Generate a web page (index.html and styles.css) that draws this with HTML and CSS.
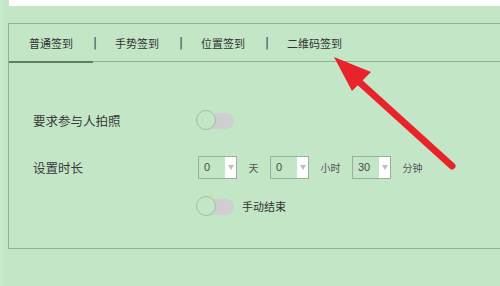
FILE: index.html
```html
<!DOCTYPE html>
<html>
<head>
<meta charset="utf-8">
<link rel="stylesheet" href="styles.css">
</head>
<body>
<div class="page">
  <div class="topbar"></div>
  <div class="panel">
    <div class="tabs">
      <div class="tab active">普通签到</div>
      <span class="sep">|</span>
      <div class="tab">手势签到</div>
      <span class="sep">|</span>
      <div class="tab">位置签到</div>
      <span class="sep">|</span>
      <div class="tab">二维码签到</div>
    </div>
    <div class="form">
      <div class="row row-photo">
        <div class="label">要求参与人拍照</div>
        <div class="switch"><span class="knob"></span></div>
      </div>
      <div class="row row-time">
        <div class="label">设置时长</div>
        <div class="times">
          <div class="select"><span class="val">0</span><span class="arrow"></span></div>
          <span class="unit">天</span>
          <div class="select"><span class="val">0</span><span class="arrow"></span></div>
          <span class="unit">小时</span>
          <div class="select"><span class="val">30</span><span class="arrow"></span></div>
          <span class="unit">分钟</span>
        </div>
      </div>
      <div class="row row-end">
        <div class="label"></div>
        <div class="switch"><span class="knob"></span></div>
        <span class="end-text">手动结束</span>
      </div>
    </div>
  </div>
  <svg class="pointer" width="500" height="286" viewBox="0 0 500 286">
    <line x1="356" y1="79" x2="452" y2="166" stroke="#e8232b" stroke-width="7" stroke-linecap="round"/>
    <polygon points="334,57 371,72 352,91" fill="#e8232b"/>
  </svg>
</div>
</body>
</html>
```

FILE: styles.css
```css
html, body {
  margin: 0;
  padding: 0;
}
body {
  background: #c2e6c6;
  font-family: "Noto Sans CJK SC", "Noto Sans", sans-serif;
  color: #333;
  overflow: hidden;
}
.page {
  position: relative;
  width: 500px;
  height: 286px;
  border-left: 2px solid #c9eacd;
  box-sizing: border-box;
  overflow: hidden;
}
.topbar {
  margin-left: 7px;
  height: 6px;
  background: #ffffff;
}
.panel {
  margin-top: 17px;
  margin-left: 6px;
  height: 226px;
  box-sizing: border-box;
  border: 1px solid #93b198;
  border-right: none;
}
.tabs {
  display: flex;
  align-items: center;
  height: 37px;
  border-bottom: 1px solid #8fad94;
  font-size: 11px;
  white-space: nowrap;
}
.tab {
  height: 37px;
  line-height: 39px;
  padding: 0 20px;
  box-sizing: border-box;
}
.tab.active {
  border-bottom: 2px solid #5f7e65;
  margin-bottom: -2px;
  height: 39px;
  width: 84px;
  padding-right: 19px;
}
.sep {
  display: inline-block;
  width: 2px;
  color: #263f52;
  font-size: 12px;
  font-family: "DejaVu Sans", sans-serif;
  line-height: 37px;
  padding-top: 2px;
}
.form {
  padding-left: 24px;
  padding-top: 48px;
}
.row {
  display: flex;
  align-items: center;
}
.label {
  width: 163px;
  font-size: 12.5px;
  color: #3a3a3a;
}
.row-photo {
  height: 20px;
}
.row-time {
  height: 23px;
  margin-top: 26px;
}
.row-end {
  height: 20px;
  margin-top: 17px;
}
.switch {
  position: relative;
  width: 38px;
  height: 20px;
}
.switch::before {
  content: "";
  position: absolute;
  left: 4px;
  top: 3px;
  width: 34px;
  height: 16px;
  border-radius: 8px;
  background: #cfcfcf;
}
.knob {
  position: absolute;
  left: 0;
  top: 0;
  width: 20px;
  height: 20px;
  box-sizing: border-box;
  border-radius: 50%;
  border: 1.5px solid #a2bea6;
  background: #c2e6c6;
}
.times {
  display: flex;
  align-items: center;
  gap: 11.5px;
  margin-left: 2px;
}
.select {
  display: flex;
  width: 39px;
  height: 23px;
  box-sizing: border-box;
  border: 1px solid #9cac9e;
}
.val {
  flex: 1;
  font-family: "Liberation Sans", sans-serif;
  font-size: 11px;
  line-height: 21px;
  padding-left: 5px;
  color: #4a4a4a;
}
.arrow {
  width: 11px;
  background: #ffffff;
  display: flex;
  align-items: center;
  justify-content: center;
}
.arrow::after {
  content: "";
  border-left: 3.5px solid transparent;
  border-right: 3.5px solid transparent;
  border-top: 5px solid #bdbdbd;
}
.unit {
  font-size: 10px;
  color: #555;
}
.end-text {
  margin-left: 8px;
  font-size: 11px;
  color: #333;
}
.pointer {
  position: absolute;
  left: -2px;
  top: 0;
}
```
